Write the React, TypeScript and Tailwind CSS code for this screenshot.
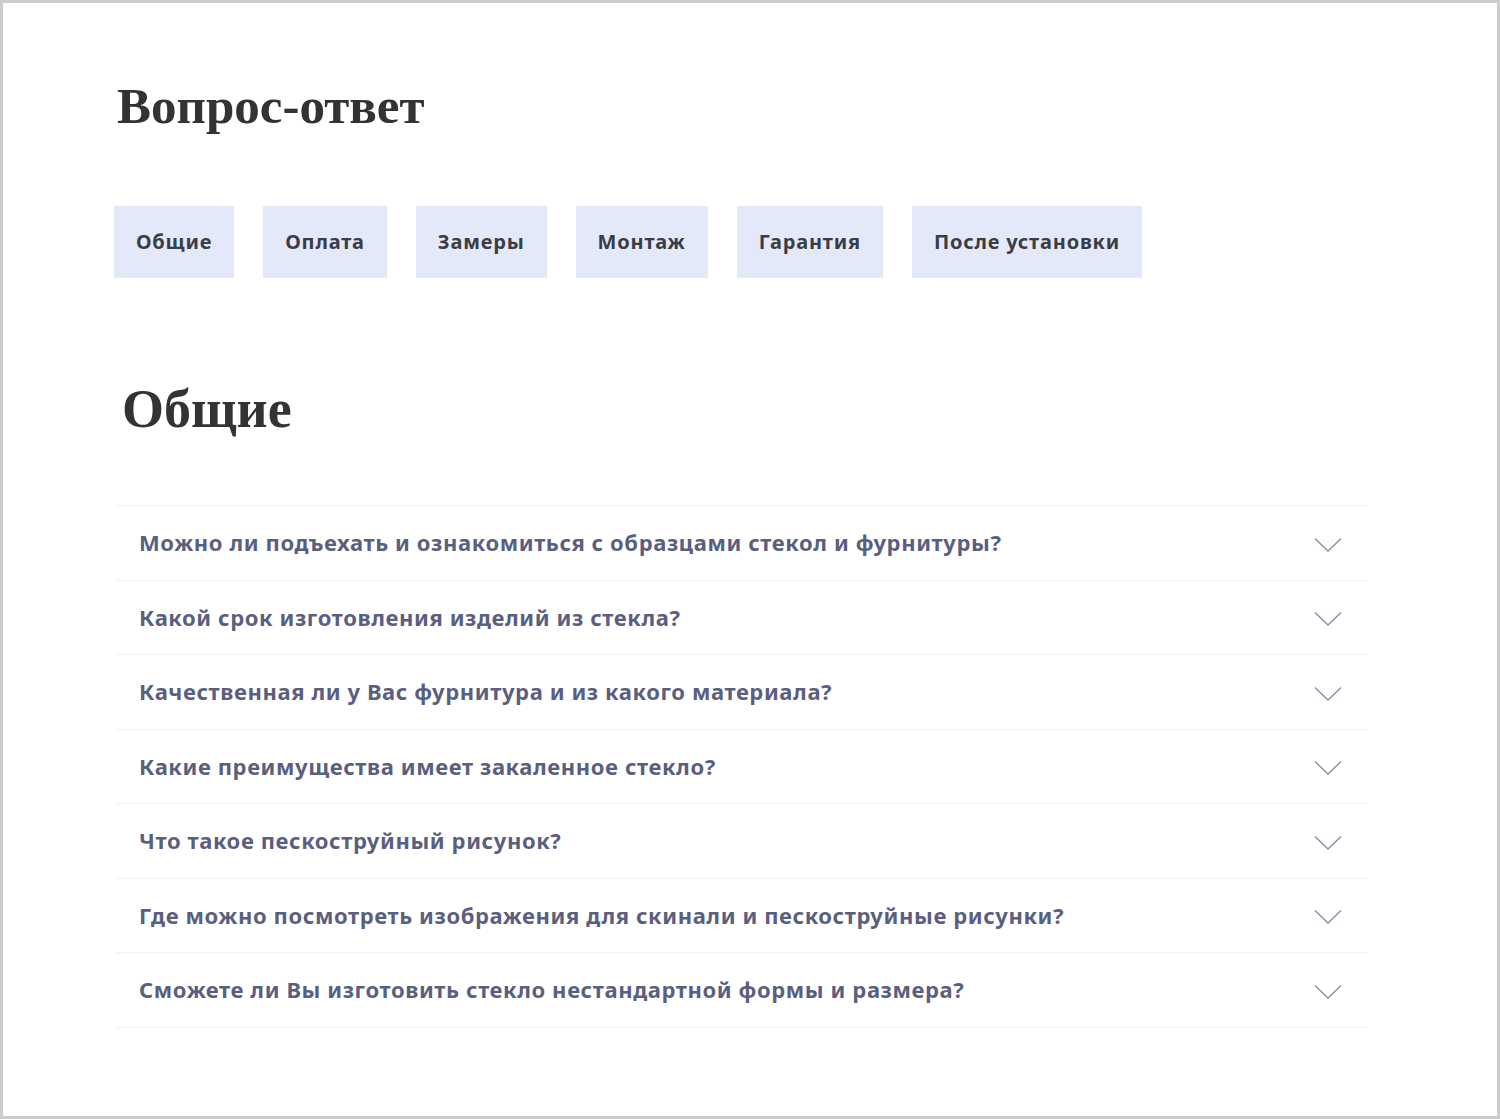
import React from "react";

const tabs = ["Общие", "Оплата", "Замеры", "Монтаж", "Гарантия", "После установки"];
const questions = [
  "Можно ли подъехать и ознакомиться с образцами стекол и фурнитуры?",
  "Какой срок изготовления изделий из стекла?",
  "Качественная ли у Вас фурнитура и из какого материала?",
  "Какие преимущества имеет закаленное стекло?",
  "Что такое пескоструйный рисунок?",
  "Где можно посмотреть изображения для скинали и пескоструйные рисунки?",
  "Сможете ли Вы изготовить стекло нестандартной формы и размера?",
];

function Chevron() {
  return (
    <svg width="28" height="16" viewBox="0 0 28 16" fill="none" className="mt-[4px]">
      <path d="M1 1.5 L14 14 L27 1.5" stroke="#8a8ea6" strokeWidth="1.4" />
    </svg>
  );
}

export default function App() {
  return (
    <div className="h-[1119px] w-[1500px] border-[3px] border-[#cccccc] bg-white overflow-hidden">
      <div className="pl-[111px] pt-[78px]">
        <h1
          className="text-[51px] font-bold text-[#333333] leading-none ml-[3px]"
          style={{ fontFamily: '"Liberation Serif", "DejaVu Serif", serif' }}
        >
          Вопрос-ответ
        </h1>
        <div
          className="mt-[74px] flex gap-[29px]"
          style={{ fontFamily: '"Noto Sans", "Open Sans", sans-serif' }}
        >
          {tabs.map((t) => (
            <div
              key={t}
              className="h-[72px] px-[22px] bg-[#e3e9f8] flex items-center text-[20px] font-bold text-[#3a3d45] tracking-[0.8px]"
            >
              {t}
            </div>
          ))}
        </div>
        <h2
          className="mt-[104px] ml-[8px] text-[54px] font-bold text-[#333333] leading-none"
          style={{ fontFamily: '"Liberation Serif", "DejaVu Serif", serif' }}
        >
          Общие
        </h2>
        <div
          className="mt-[69px] ml-[3px] w-[1251px] border-t border-[#eef0f7]"
          style={{ fontFamily: '"Noto Sans", "Open Sans", sans-serif' }}
        >
          {questions.map((q) => (
            <div
              key={q}
              className="h-[74.5px] border-b border-[#eef0f7] flex items-center justify-between pl-[22px] pr-[26px]"
            >
              <span className="text-[22px] font-bold text-[#5a5f80] tracking-[0.6px]">{q}</span>
              <Chevron />
            </div>
          ))}
        </div>
      </div>
    </div>
  );
}
